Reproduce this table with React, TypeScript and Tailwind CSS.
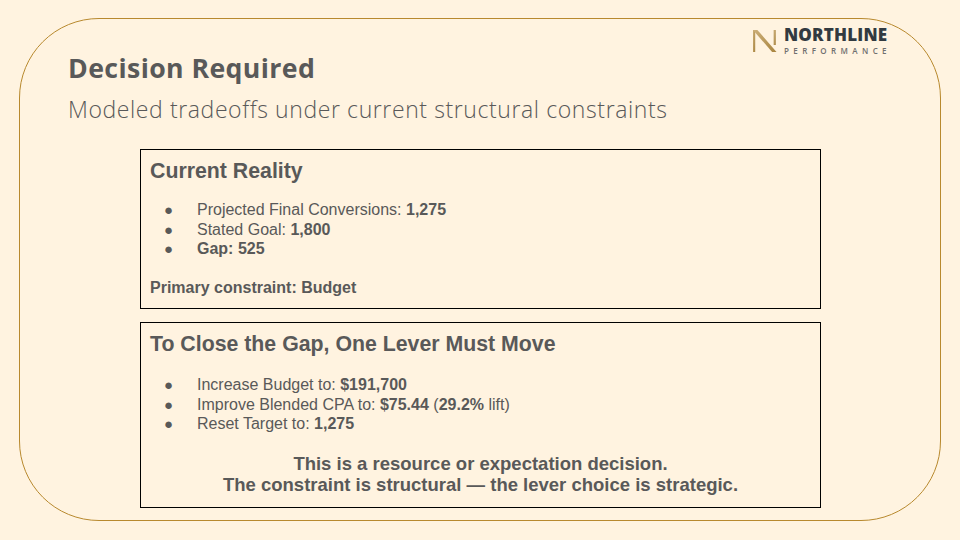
import React from "react";

type Bullet = { key: string; content: React.ReactNode };

const body = { fontFamily: '"Liberation Sans", Arial, sans-serif' };
const display = { fontFamily: '"Open Sans", Lato, sans-serif' };

const BulletList = ({ items }: { items: Bullet[] }) => (
  <ul className="flex flex-col">
    {items.map((item) => (
      <li key={item.key} className="flex items-center text-[16px] leading-[19.5px]">
        <span className="w-[47px] pl-[14px] text-[15px]">●</span>
        <span>{item.content}</span>
      </li>
    ))}
  </ul>
);

const LogoMark = () => (
  <svg width="24" height="22" viewBox="0 0 24 22" aria-hidden>
    <defs>
      <linearGradient id="gold" x1="0" y1="0" x2="1" y2="1">
        <stop offset="0" stopColor="#cdb07a" />
        <stop offset="1" stopColor="#a8843f" />
      </linearGradient>
    </defs>
    <rect x="0" y="0" width="2.2" height="22" fill="url(#gold)" />
    <polygon points="0,0 4.4,0 23.5,22 19.1,22" fill="url(#gold)" />
    <rect x="20.6" y="0" width="2.2" height="15" fill="url(#gold)" />
  </svg>
);

const Logo = () => (
  <div className="flex items-center gap-[7px]">
    <LogoMark />
    <div className="flex flex-col">
      <span
        className="text-[17px] font-extrabold leading-[16px] tracking-[0.2px] text-[#323a40]"
        style={{ fontFamily: '"Open Sans", sans-serif' }}
      >
        NORTHLINE
      </span>
      <span
        className="mt-[3px] text-[8px] font-semibold leading-[9px] tracking-[4.4px] text-[#6f6f6f]"
        style={{ fontFamily: '"Open Sans", sans-serif' }}
      >
        PERFORMANCE
      </span>
    </div>
  </div>
);

const reality: Bullet[] = [
  {
    key: "projected",
    content: (
      <>
        Projected Final Conversions: <b>1,275</b>
      </>
    ),
  },
  {
    key: "goal",
    content: (
      <>
        Stated Goal: <b>1,800</b>
      </>
    ),
  },
  { key: "gap", content: <b>Gap: 525</b> },
];

const levers: Bullet[] = [
  {
    key: "budget",
    content: (
      <>
        Increase Budget to: <b>$191,700</b>
      </>
    ),
  },
  {
    key: "cpa",
    content: (
      <>
        Improve Blended CPA to: <b>$75.44</b> (<b>29.2%</b> lift)
      </>
    ),
  },
  {
    key: "target",
    content: (
      <>
        Reset Target to: <b>1,275</b>
      </>
    ),
  },
];

export default function App() {
  return (
    <div className="h-[540px] w-[960px] overflow-hidden bg-[#fff3e0] pl-[19px] pt-[18px]">
      <div className="flex h-[503px] w-[922px] flex-col rounded-[80px] border-[1.5px] border-[#b8892e] pt-[8px]">
        <div className="flex justify-end pr-[49px]">
          <Logo />
        </div>

        <div className="-mt-[3px] pl-[48px] text-[#595959]" style={display}>
          <h1 className="text-[26.7px] font-bold leading-[32px] tracking-[0.4px]">
            Decision Required
          </h1>
          <p className="mt-[11px] text-[23px] font-light leading-[28px] tracking-[0.6px]">
            Modeled tradeoffs under current structural constraints
          </p>
        </div>

        <div className="ml-[120px] mt-[26px] flex flex-col gap-[13px] text-[#595959]" style={body}>
          <section className="h-[160px] w-[681px] border border-black px-[9px] pt-[9px]">
            <h2 className="text-[21.3px] font-bold leading-[24px]">Current Reality</h2>
            <div className="mt-[17px]">
              <BulletList items={reality} />
            </div>
            <p className="mt-[19px] text-[16px] font-bold leading-[19px]">
              Primary constraint: Budget
            </p>
          </section>

          <section className="h-[186px] w-[681px] border border-black px-[9px] pt-[9px]">
            <h2 className="text-[21.3px] font-bold leading-[24px]">
              To Close the Gap, One Lever Must Move
            </h2>
            <div className="mt-[19px]">
              <BulletList items={levers} />
            </div>
            <div className="mt-[19px] text-center text-[18.5px] font-bold leading-[21px]">
              <p>This is a resource or expectation decision.</p>
              <p>The constraint is structural — the lever choice is strategic.</p>
            </div>
          </section>
        </div>
      </div>
    </div>
  );
}
